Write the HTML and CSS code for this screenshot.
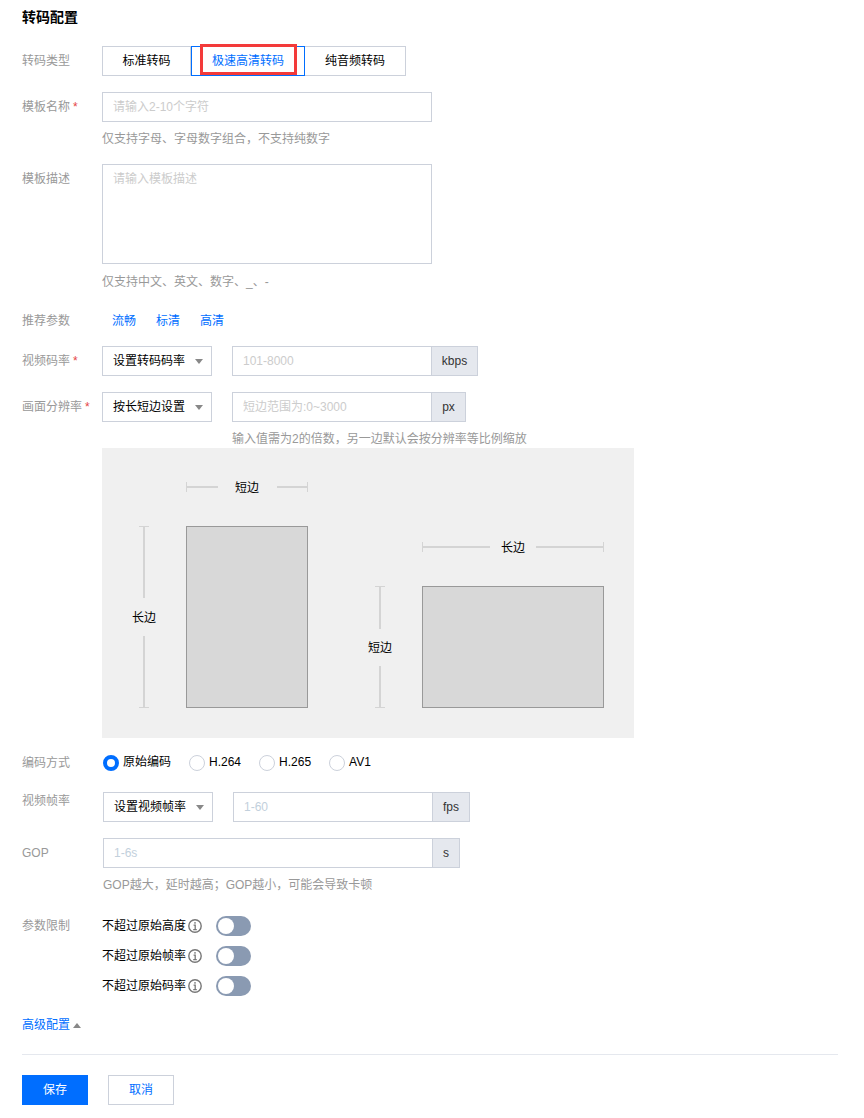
FILE: index.html
```html
<!DOCTYPE html>
<html>
<head>
    <meta charset="utf-8">
    <title>转码配置</title>
    <link rel="stylesheet" href="styles.css">
</head>
<body>
    <h2 class="page-title">转码配置</h2>

    <div class="row row-type">
        <label class="row-label">转码类型</label>
        <div class="segment">
            <div class="segment-item">标准转码</div>
            <div class="segment-item active">极速高清转码</div>
            <div class="segment-item">纯音频转码</div>
            <div class="mark-box"></div>
        </div>
    </div>

    <div class="row row-name">
        <label class="row-label">模板名称<span class="req">*</span></label>
        <div class="row-body">
            <input class="text-input wide" type="text" placeholder="请输入2-10个字符">
            <div class="hint">仅支持字母、字母数字组合，不支持纯数字</div>
        </div>
    </div>

    <div class="row row-desc">
        <label class="row-label">模板描述</label>
        <div class="row-body">
            <textarea class="text-area" placeholder="请输入模板描述"></textarea>
            <div class="hint hint-desc">仅支持中文、英文、数字、_、-</div>
        </div>
    </div>

    <div class="row row-preset">
        <label class="row-label">推荐参数</label>
        <div class="presets">
            <a class="link">流畅</a>
            <a class="link">标清</a>
            <a class="link">高清</a>
        </div>
    </div>

    <div class="row row-bitrate">
        <label class="row-label">视频码率<span class="req">*</span></label>
        <div class="combo">
            <div class="select">设置转码码率<i class="caret"></i></div>
            <div class="input-group">
                <input class="text-input" type="text" placeholder="101-8000">
                <span class="addon addon-kbps">kbps</span>
            </div>
        </div>
    </div>

    <div class="row row-res">
        <label class="row-label">画面分辨率<span class="req">*</span></label>
        <div class="combo">
            <div class="select">按长短边设置<i class="caret"></i></div>
            <div class="input-group">
                <input class="text-input" type="text" placeholder="短边范围为:0~3000">
                <span class="addon addon-px">px</span>
            </div>
        </div>
    </div>
    <div class="hint hint-res">输入值需为2的倍数，另一边默认会按分辨率等比例缩放</div>

    <svg class="diagram" width="532" height="290" viewBox="0 0 532 290">
        <rect width="532" height="290" fill="#f0f0f0"/>
        <rect x="84.5" y="78.5" width="121" height="181" fill="#d8d8d8" stroke="#999"/>
        <rect x="320.5" y="138.5" width="181" height="121" fill="#d8d8d8" stroke="#999"/>
        <g stroke="#d4d4d4" fill="none">
            <path d="M84.5 34v10M205.5 34v10"/>
            <path stroke-width="2" d="M84 39h32M175 39h31"/>
            <path d="M320.5 94v10M501.5 94v10"/>
            <path stroke-width="2" d="M320 99h68M434 99h68"/>
            <path d="M37 78.5h10M37 259.5h10"/>
            <path stroke-width="2" d="M42 78v72M42 188v72"/>
            <path d="M273 138.5h10M273 259.5h10"/>
            <path stroke-width="2" d="M278 138v43M278 218v42"/>
        </g>
        <g class="diagram-text" text-anchor="middle">
            <text x="145" y="44">短边</text>
            <text x="411" y="104">长边</text>
            <text x="42" y="174">长边</text>
            <text x="278" y="204">短边</text>
        </g>
    </svg>

    <div class="row row-codec">
        <label class="row-label">编码方式</label>
        <div class="radios">
            <span class="radio checked"><i></i>原始编码</span>
            <span class="radio"><i></i>H.264</span>
            <span class="radio"><i></i>H.265</span>
            <span class="radio"><i></i>AV1</span>
        </div>
    </div>

    <div class="row row-fps">
        <label class="row-label">视频帧率</label>
        <div class="combo shifted">
            <div class="select">设置视频帧率<i class="caret"></i></div>
            <div class="input-group">
                <input class="text-input tinted" type="text" placeholder="1-60">
                <span class="addon addon-fps">fps</span>
            </div>
        </div>
    </div>

    <div class="row row-gop">
        <label class="row-label">GOP</label>
        <div class="row-body shifted">
            <div class="input-group">
                <input class="text-input gop-input tinted" type="text" placeholder="1-6s">
                <span class="addon addon-s">s</span>
            </div>
            <div class="hint">GOP越大，延时越高；GOP越小，可能会导致卡顿</div>
        </div>
    </div>

    <div class="row row-limit">
        <label class="row-label">参数限制</label>
        <div class="limits">
            <div class="limit">
                <span class="limit-text">不超过原始高度</span>
                <svg class="info" width="14" height="14" viewBox="0 0 14 14"><circle cx="7" cy="7" r="6.2" fill="none" stroke="#777" stroke-width="1.4"/><path d="M7 3v1.7M5.6 6.2H7.2V10.4M5.2 10.6h3.6" fill="none" stroke="#777" stroke-width="1.3"/></svg>
                <span class="switch"></span>
            </div>
            <div class="limit">
                <span class="limit-text">不超过原始帧率</span>
                <svg class="info" width="14" height="14" viewBox="0 0 14 14"><circle cx="7" cy="7" r="6.2" fill="none" stroke="#777" stroke-width="1.4"/><path d="M7 3v1.7M5.6 6.2H7.2V10.4M5.2 10.6h3.6" fill="none" stroke="#777" stroke-width="1.3"/></svg>
                <span class="switch"></span>
            </div>
            <div class="limit">
                <span class="limit-text">不超过原始码率</span>
                <svg class="info" width="14" height="14" viewBox="0 0 14 14"><circle cx="7" cy="7" r="6.2" fill="none" stroke="#777" stroke-width="1.4"/><path d="M7 3v1.7M5.6 6.2H7.2V10.4M5.2 10.6h3.6" fill="none" stroke="#777" stroke-width="1.3"/></svg>
                <span class="switch"></span>
            </div>
        </div>
    </div>

    <div class="advanced"><a class="link">高级配置</a><i class="caret-up"></i></div>

    <div class="footer">
        <button class="btn btn-primary">保存</button>
        <button class="btn">取消</button>
    </div>
</body>
</html>
```

FILE: styles.css
```css
* {
    box-sizing: border-box;
}
body {
    margin: 0;
    padding: 0 26px 0 22px;
    background: #fff;
    color: #000;
    font-family: "Liberation Sans", "Noto Sans CJK SC", sans-serif;
    font-size: 12px;
    line-height: 18px;
}
.page-title {
    margin: 0;
    padding-top: 8px;
    height: 46px;
    font-size: 14px;
    line-height: 18px;
    font-weight: bold;
}

.row {
    display: flex;
    align-items: flex-start;
}
.row-label {
    flex: none;
    width: 80px;
    padding-top: 6px;
    color: #999;
}
.req {
    margin-left: 3px;
    color: #e54545;
}
.row-body {
    display: flex;
    flex-direction: column;
}
.hint {
    margin-top: 8px;
    color: #999;
}
.hint-desc {
    margin-top: 9px;
}

.row-name { margin-top: 16px; }
.row-desc { margin-top: 16px; }
.row-preset { margin-top: 15px; }
.row-bitrate { margin-top: 16px; }
.row-res { margin-top: 16px; }
.row-fps { margin-top: 20px; }
.row-fps .row-label { padding-top: 0; }
.row-gop { margin-top: 16px; }
.row-limit { margin-top: 17px; }

.segment {
    display: flex;
    position: relative;
    height: 30px;
}
.segment-item {
    width: 89px;
    height: 30px;
    line-height: 28px;
    text-align: center;
    border: 1px solid #ccd1db;
}
.segment-item:nth-child(2) {
    width: 114px;
}
.segment-item:nth-child(3) {
    width: 102px;
    margin-left: -1px;
}
.segment-item.active {
    position: relative;
    border-color: #006eff;
    color: #006eff;
    z-index: 1;
}
.mark-box {
    position: absolute;
    left: 98px;
    top: -2px;
    width: 97px;
    height: 31px;
    border: 3px solid #f33a3a;
    z-index: 2;
}

.text-input, .text-area {
    display: block;
    height: 30px;
    padding: 0 10px;
    border: 1px solid #ccd1db;
    border-radius: 0;
    outline: none;
    background: #fff;
    font: inherit;
    color: #000;
}
.text-input::placeholder, .text-area::placeholder {
    color: #ccc;
    opacity: 1;
}
.tinted::placeholder {
    color: #c2d0dc;
}
.wide {
    width: 330px;
}
.text-area {
    width: 330px;
    height: 100px;
    padding: 5px 10px;
    resize: none;
}

.presets {
    display: flex;
    gap: 20px;
    padding: 6px 0 0 10px;
}
.link {
    color: #006eff;
}

.combo {
    display: flex;
    gap: 20px;
}
.shifted {
    margin-left: 1px;
}
.select {
    position: relative;
    width: 110px;
    height: 30px;
    padding-left: 10px;
    line-height: 28px;
    border: 1px solid #ccd1db;
}
.caret {
    position: absolute;
    right: 8px;
    top: 12px;
    border-style: solid;
    border-width: 5px 4px 0 4px;
    border-color: #888 transparent transparent transparent;
}
.input-group {
    display: flex;
}
.input-group .text-input {
    width: 200px;
}
.input-group .gop-input {
    width: 330px;
}
.addon {
    height: 30px;
    margin-left: -1px;
    line-height: 28px;
    text-align: center;
    border: 1px solid #ccd1db;
    background: #e5e8ee;
    color: #333;
}
.addon-kbps { width: 47px; }
.addon-px { width: 35px; }
.addon-fps { width: 38px; }
.addon-s { width: 28px; }

.hint-res {
    margin: 8px 0 0 210px;
    height: 18px;
}
.diagram {
    display: block;
    margin: 0 0 0 80px;
}
.diagram-text {
    font-size: 12px;
    fill: #000;
}

.row-codec {
    margin-top: 16px;
}
.row-codec .row-label {
    padding-top: 0;
}
.radios {
    display: flex;
    gap: 18px;
    margin: -1px 0 0 1px;
}
.radio {
    display: flex;
    align-items: center;
    height: 18px;
}
.radio i {
    width: 16px;
    height: 16px;
    margin: 1px 4px 0 0;
    border: 1px solid #ccd1db;
    border-radius: 50%;
}
.radio.checked i {
    border: 4px solid #006eff;
}

.limits {
    display: flex;
    flex-direction: column;
    gap: 10px;
    margin-top: 5px;
}
.limit {
    display: flex;
    align-items: center;
    height: 20px;
}
.info {
    margin-left: 2px;
}
.switch {
    position: relative;
    width: 35px;
    height: 20px;
    margin-left: 14px;
    border-radius: 10px;
    background: #8a9ab2;
}
.switch::after {
    content: "";
    position: absolute;
    left: 2px;
    top: 2px;
    width: 16px;
    height: 16px;
    border-radius: 50%;
    background: #fff;
}

.advanced {
    display: flex;
    align-items: center;
    margin-top: 20px;
    padding-bottom: 20px;
    border-bottom: 1px solid #e5e8ee;
}
.caret-up {
    margin-left: 3px;
    border-style: solid;
    border-width: 0 4px 5px 4px;
    border-color: transparent transparent #888 transparent;
}

.footer {
    display: flex;
    gap: 20px;
    margin-top: 20px;
}
.btn {
    width: 66px;
    height: 30px;
    border: 1px solid #ccd1db;
    background: #fff;
    color: #006eff;
    font: inherit;
}
.btn-primary {
    border-color: #006eff;
    background: #006eff;
    color: #fff;
}
```
